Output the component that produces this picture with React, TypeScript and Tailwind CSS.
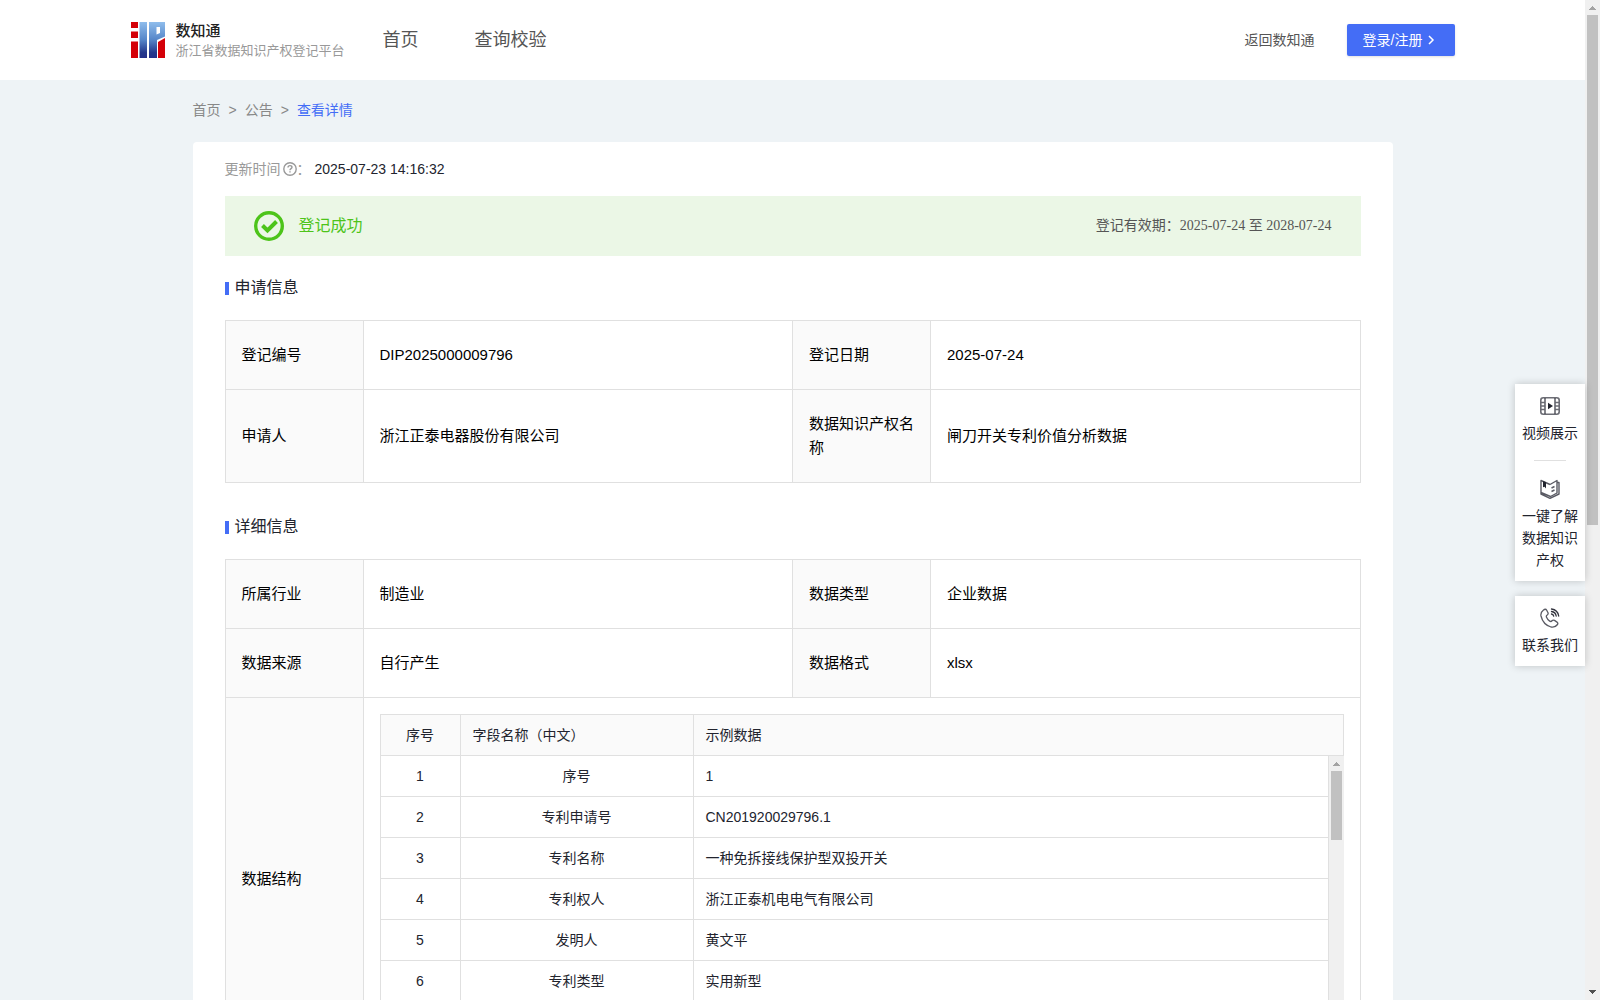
import React from "react";

interface InfoPair {
  label: string;
  value: string;
}

interface FieldRow {
  name: string;
  sample: string;
}

const applyRows: InfoPair[][] = [
  [
    { label: "登记编号", value: "DIP2025000009796" },
    { label: "登记日期", value: "2025-07-24" },
  ],
  [
    { label: "申请人", value: "浙江正泰电器股份有限公司" },
    { label: "数据知识产权名称", value: "闸刀开关专利价值分析数据" },
  ],
];

const detailRows: InfoPair[][] = [
  [
    { label: "所属行业", value: "制造业" },
    { label: "数据类型", value: "企业数据" },
  ],
  [
    { label: "数据来源", value: "自行产生" },
    { label: "数据格式", value: "xlsx" },
  ],
];

const fieldRows: FieldRow[] = [
  { name: "序号", sample: "1" },
  { name: "专利申请号", sample: "CN201920029796.1" },
  { name: "专利名称", sample: "一种免拆接线保护型双投开关" },
  { name: "专利权人", sample: "浙江正泰机电电气有限公司" },
  { name: "发明人", sample: "黄文平" },
  { name: "专利类型", sample: "实用新型" },
];

const Logo: React.FC = () => (
  <svg width="34" height="36" viewBox="0 0 34 36" aria-hidden="true">
    <defs>
      <linearGradient id="logo-blue" gradientUnits="userSpaceOnUse" x1="0" y1="0" x2="0" y2="36">
        <stop offset="0" stopColor="#8fbdec" />
        <stop offset="0.5" stopColor="#5585c8" />
        <stop offset="0.85" stopColor="#24388c" />
        <stop offset="1" stopColor="#24308a" />
      </linearGradient>
    </defs>
    <path fill="#d40008" d="M0 0h7v6H0zM0 9.500h7V16H0zM0 19.500h7V36H0z" />
    <path fill="url(#logo-blue)" d="M8.500 0H16v36H8.500zM18 0h16v14.500L26 18v18h-8zM25.500 5v7.500l3.500-1.500V5z" fillRule="evenodd" />
    <path fill="#d40008" d="M27 20l7-4v20h-7z" />
  </svg>
);

const FilmIcon: React.FC = () => (
  <svg width="20" height="20" viewBox="0 0 20 20" fill="none" aria-hidden="true">
    <rect x="0.8" y="1.800" width="18.400" height="16.400" rx="2.500" stroke="#6c6d75" strokeWidth="1.600" />
    <path d="M1 6.500h3.500M1 10h3.500M1 13.500h3.500M15.500 6.500H19M15.500 10H19M15.500 13.500H19" stroke="#6c6d75" strokeWidth="1.400" />
    <path d="M5 2v16M15 2v16" stroke="#33343e" strokeWidth="1.200" />
    <path d="M8 6.800l5 3.200-5 3.200z" fill="#22242e" />
  </svg>
);

const BookIcon: React.FC = () => (
  <svg width="20" height="20" viewBox="0 0 20 20" fill="none" stroke="#5a5b64" strokeWidth="1.400" strokeLinejoin="round" aria-hidden="true">
    <path d="M10 5.500L1 1.500v13.500l9 4.300 9-4.300V3.500h-1.500M10 5.500l7-4v12.500l-6.500 3.500L1 13.500" />
    <path d="M11.500 9l3-1.500M11.500 12.500l3-1.500" />
    <path d="M3 2l3 1.300v6.200L4.500 7.800 3 8.300z" fill="#22242e" stroke="none" />
  </svg>
);

const PhoneIcon: React.FC = () => (
  <svg width="20" height="20" viewBox="0 0 20 20" fill="none" stroke="#5a5b64" strokeWidth="1.300" strokeLinejoin="round" strokeLinecap="round" aria-hidden="true">
    <path d="M3.500 2C1.500 3.500.5 5.500 1 8c1.200 5 5 9.500 10 11 2.500.6 5-.5 6.500-2.500.6-1 .3-1.800-.5-2.400l-2.500-1.700c-1-.6-1.800-.4-2.500.4-.7.800-1.400.9-2.300.3C8 12 7 10.600 6.400 9.100c-.3-1 0-1.600.8-2.100.9-.6 1.200-1.300.8-2.300L6.700 2.200C6 .9 4.600 1 3.500 2z" />
    <path d="M11.500 1c4 .6 6.600 3 7.200 7M11.500 3.500c2.700.4 4.300 2 4.700 4.500M11.500 6c1.200.3 2 1 2.200 2.200" stroke="#33343e" />
  </svg>
);

const Scrollbar: React.FC<{ thumb: string }> = ({ thumb }) => (
  <div className="flex h-full w-[15px] shrink-0 flex-col items-center bg-[#f0f0f0]" aria-hidden="true">
    <svg className="shrink-0" width="15" height="15" viewBox="0 0 15 15">
      <path d="M4 10h7v-1h-1v-1h-1v-1h-1v-1h-1v1h-1v1h-1v1h-1z" fill="#a3a3a3" />
    </svg>
    <div className={`w-[11px] shrink-0 bg-[#c1c1c1] ${thumb}`} />
    <svg className="mt-auto shrink-0" width="15" height="15" viewBox="0 0 15 15">
      <path d="M4 5h7v1h-1v1h-1v1h-1v1h-1v-1h-1v-1h-1v-1h-1z" fill="#505050" />
    </svg>
  </div>
);

const SectionTitle: React.FC<{ title: string }> = ({ title }) => (
  <h2 className="mb-5 flex items-center gap-1.5 text-base leading-6 text-[#22242e]">
    <span className="h-[13px] w-1 bg-[#446df6]" />
    {title}
  </h2>
);

const labelCell = "border border-[#e0e0e0] bg-[#fafafa] px-4 py-[22px] text-left font-normal";
const valueCell = "border border-[#e0e0e0] px-4 py-[22px]";

const InfoTable: React.FC<{ rows: InfoPair[][]; children?: React.ReactNode }> = ({ rows, children }) => (
  <table className="w-full table-fixed border-collapse text-[15px] leading-6 text-black">
    <colgroup>
      <col className="w-[138px]" />
      <col />
      <col className="w-[138px]" />
      <col />
    </colgroup>
    <tbody>
      {rows.map((row) => (
        <tr key={row[0].label}>
          {row.map((item) => (
            <React.Fragment key={item.label}>
              <th scope="row" className={labelCell}>{item.label}</th>
              <td className={valueCell}>{item.value}</td>
            </React.Fragment>
          ))}
        </tr>
      ))}
      {children}
    </tbody>
  </table>
);

const FieldCols: React.FC = () => (
  <colgroup>
    <col className="w-20" />
    <col className="w-[233px]" />
    <col />
  </colgroup>
);

const FieldTable: React.FC = () => (
  <div className="text-sm leading-5 text-[#22242e]">
    <table className="w-full table-fixed border-collapse bg-[#fafafa]">
      <FieldCols />
      <thead>
        <tr>
          <th className="border border-[#e0e0e0] px-3 py-2.5 font-normal">序号</th>
          <th className="border border-[#e0e0e0] px-3 py-2.5 text-left font-normal">字段名称（中文）</th>
          <th className="border border-[#e0e0e0] px-3 py-2.5 text-left font-normal">示例数据</th>
        </tr>
      </thead>
    </table>
    <div className="flex h-[288px] overflow-hidden">
      <div className="flex-1">
        <table className="w-full table-fixed border-collapse">
          <FieldCols />
          <tbody>
            {fieldRows.map((row, index) => (
              <tr key={row.name}>
                <td className="border border-t-0 border-[#e0e0e0] px-3 py-2.5 text-center">{index + 1}</td>
                <td className="border border-t-0 border-[#e0e0e0] px-3 py-2.5 text-center">{row.name}</td>
                <td className="border border-t-0 border-[#e0e0e0] px-3 py-2.5">{row.sample}</td>
              </tr>
            ))}
          </tbody>
        </table>
      </div>
      <Scrollbar thumb="h-[69px]" />
    </div>
  </div>
);

const Header: React.FC = () => (
  <header className="bg-white">
    <div className="mx-auto flex h-20 max-w-[1324px] items-center">
      <a href="#" className="flex items-center gap-[11px]">
        <Logo />
        <span className="flex flex-col pt-0.5">
          <span className="text-[15px] leading-5 font-medium text-[#222]">数知通</span>
          <span className="text-[13px] leading-5 text-[#999]">浙江省数据知识产权登记平台</span>
        </span>
      </a>
      <nav className="ml-[38px] flex gap-14 text-lg text-[#555]">
        <a href="#">首页</a>
        <a href="#">查询校验</a>
      </nav>
      <a href="#" className="ml-auto text-sm text-[#555]">返回数知通</a>
      <button className="ml-8 flex h-8 w-[108px] items-center justify-center gap-1 rounded-xs bg-[#446df6] text-sm text-white shadow-sm">
        登录/注册
        <svg width="12" height="10" viewBox="0 0 12 10" fill="none" stroke="currentColor" strokeWidth="1.500" aria-hidden="true">
          <path d="M3 1l4 4-4 4" />
        </svg>
      </button>
    </div>
  </header>
);

const SideBar: React.FC = () => (
  <aside className="absolute top-96 right-[15px] flex w-[70px] flex-col gap-[15px] text-center text-sm leading-[22px] text-[#22242e]">
    <div className="flex flex-col items-center bg-white px-1.5 pt-3 pb-2.5 shadow-[0_0_8px_rgba(0,0,0,0.2)]">
      <a href="#" className="flex flex-col items-center gap-1.5">
        <FilmIcon />
        视频展示
      </a>
      <span className="mt-4 mb-[18px] h-px w-8 bg-[#e0e0e0]" />
      <a href="#" className="flex flex-col items-center gap-1.5">
        <BookIcon />
        一键了解数据知识产权
      </a>
    </div>
    <a href="#" className="flex flex-col items-center gap-1.5 bg-white px-1.5 pt-3 pb-2.5 shadow-[0_0_8px_rgba(0,0,0,0.2)]">
      <PhoneIcon />
      联系我们
    </a>
  </aside>
);

const App: React.FC = () => {
  return (
    <div className="relative flex h-screen overflow-hidden bg-[#eef3f6] font-['Liberation_Sans','Noto_Sans_CJK_SC',sans-serif]">
      <div className="min-w-0 flex-1">
        <Header />
        <main className="mx-auto max-w-[1200px]">
          <nav className="flex gap-2 pt-5 pb-[22px] text-sm leading-5 text-[#888]">
            <a href="#">首页</a>
            <span>&gt;</span>
            <a href="#">公告</a>
            <span>&gt;</span>
            <a href="#" className="text-[#446df6]">查看详情</a>
          </nav>
          <div className="rounded bg-white px-8 pt-4 pb-8">
            <div className="mb-4 flex items-center text-sm leading-[22px] text-[#999]">
              更新时间
              <svg className="ml-0.5" width="14" height="14" viewBox="0 0 14 14" fill="none" stroke="currentColor" strokeWidth="1.400" aria-hidden="true">
                <circle cx="7" cy="7" r="6.200" />
                <path d="M5 5.600c0-1.300.9-2 2-2s2 .7 2 1.700c0 1.300-2 1.400-2 2.900M7 9.300v1.300" />
              </svg>
              <span className="mr-1">：</span>
              <span className="text-[#22242e]">2025-07-23 14:16:32</span>
            </div>
            <div className="mb-5 flex h-[60px] items-center bg-[#ebf7e6] px-[29px]">
              <svg width="30" height="30" viewBox="0 0 30 30" fill="none" stroke="#4dc41a" aria-hidden="true">
                <circle cx="15" cy="15" r="13.300" strokeWidth="3.400" />
                <path d="M8.500 14.500l5 5 9-9" strokeWidth="4" />
              </svg>
              <span className="ml-[15px] text-base text-[#4dc41a]">登记成功</span>
              <span className="ml-auto font-['Liberation_Serif','Noto_Sans_CJK_SC',serif] text-sm text-[#555]">
                登记有效期：2025-07-24 至 2028-07-24
              </span>
            </div>
            <SectionTitle title="申请信息" />
            <InfoTable rows={applyRows} />
            <div className="h-8" />
            <SectionTitle title="详细信息" />
            <InfoTable rows={detailRows}>
              <tr>
                <th scope="row" className={labelCell}>数据结构</th>
                <td colSpan={3} className="border border-[#e0e0e0] p-4">
                  <FieldTable />
                </td>
              </tr>
            </InfoTable>
          </div>
        </main>
      </div>
      <Scrollbar thumb="h-[510px]" />
      <SideBar />
    </div>
  );
};

export default App;
